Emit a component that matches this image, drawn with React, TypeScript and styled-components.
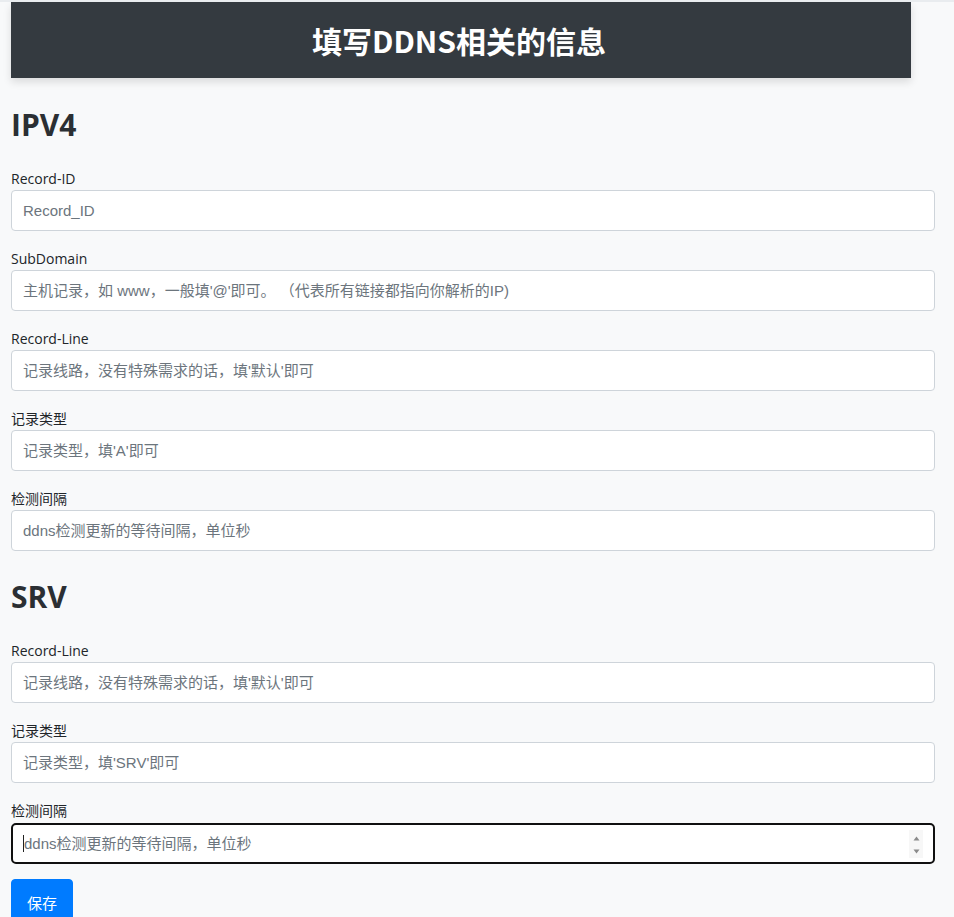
import React from "react";
import styled, { createGlobalStyle } from "styled-components";

const GlobalStyle = createGlobalStyle`
  html, body {
    margin: 0;
    padding: 0;
    background: #f8f9fa;
  }
  body {
    border-top: 2px solid #e9ecef;
    font-family: "Open Sans", "Noto Sans CJK SC", sans-serif;
    color: #212529;
  }
`;

const Page = styled.div`
  display: flex;
  flex-direction: column;
  padding: 0 19px 0 11px;
  min-height: 915px;
`;

const Header = styled.header`
  width: 900px;
  height: 76px;
  background: #343a40;
  box-shadow: 0 4px 8px rgba(0, 0, 0, 0.12);
  display: flex;
  align-items: center;
  justify-content: center;
`;

const Title = styled.h1`
  margin: 0 4px 0 0;
  color: #fff;
  font-family: "Noto Sans CJK SC", sans-serif;
  font-size: 30px;
  font-weight: 700;
  line-height: 1.2;
`;

const SectionTitle = styled.h2<{ $first?: boolean }>`
  margin: ${(p) => (p.$first ? "29px" : "11px")} 0 25px;
  font-family: "Open Sans", "Noto Sans CJK SC", sans-serif;
  font-size: 30px;
  font-weight: 700;
  line-height: 36px;
  color: #2b2f33;
`;

const Group = styled.div`
  display: flex;
  flex-direction: column;
  margin-bottom: 17px;
`;

const Label = styled.label`
  font-family: "Open Sans", "Noto Sans CJK SC", sans-serif;
  font-size: 14px;
  line-height: 21px;
  margin-bottom: 1px;
  color: #212529;
`;

const InputWrap = styled.div`
  position: relative;
  display: flex;
`;

const Input = styled.input<{ $focused?: boolean }>`
  box-sizing: border-box;
  width: 100%;
  height: 41px;
  padding: 0 11px;
  border: 1px solid #ced4da;
  border-radius: 4px;
  background: #fff;
  font-family: "Liberation Sans", "Noto Sans CJK SC", sans-serif;
  font-size: 15px;
  color: #495057;
  outline: none;
  -moz-appearance: textfield;
  &::placeholder {
    color: #6c757d;
  }
  &::-webkit-inner-spin-button,
  &::-webkit-outer-spin-button {
    -webkit-appearance: none;
    margin: 0;
  }
  ${(p) =>
    p.$focused
      ? `border: 2px solid #101010; padding: 0 10px 0 11px; border-radius: 5px; margin-top: 1px;`
      : ""}
`;

const Spinner = styled.div`
  position: absolute;
  right: 12px;
  top: 8px;
  width: 14px;
  height: 28px;
  background: #f7f7f7;
  display: flex;
  flex-direction: column;
  align-items: center;
  justify-content: space-between;
  padding: 6px 0 4px;
  box-sizing: border-box;
  pointer-events: none;
`;

const Caret = styled.span`
  position: absolute;
  left: 12px;
  top: 13px;
  width: 1px;
  height: 17px;
  background: #222;
  pointer-events: none;
`;

const SaveButton = styled.button`
  align-self: flex-start;
  margin-top: -2px;
  padding: 12px 15px;
  border: 1px solid #007bff;
  border-radius: 4px;
  background: #007bff;
  color: #fff;
  font-family: "Noto Sans CJK SC", sans-serif;
  font-size: 15px;
  line-height: 22px;
  cursor: pointer;
`;

type Field = { label: string; placeholder: string; type?: string; focused?: boolean };

const ipv4: Field[] = [
  { label: "Record-ID", placeholder: "Record_ID" },
  { label: "SubDomain", placeholder: "主机记录，如 www，一般填'@'即可。 （代表所有链接都指向你解析的IP)" },
  { label: "Record-Line", placeholder: "记录线路，没有特殊需求的话，填'默认'即可" },
  { label: "记录类型", placeholder: "记录类型，填'A'即可" },
  { label: "检测间隔", placeholder: "ddns检测更新的等待间隔，单位秒" },
];

const srv: Field[] = [
  { label: "Record-Line", placeholder: "记录线路，没有特殊需求的话，填'默认'即可" },
  { label: "记录类型", placeholder: "记录类型，填'SRV'即可" },
  { label: "检测间隔", placeholder: "ddns检测更新的等待间隔，单位秒", type: "number", focused: true },
];

function FieldGroup({ f, id }: { f: Field; id: string }) {
  return (
    <Group>
      <Label htmlFor={id}>{f.label}</Label>
      <InputWrap>
        <Input id={id} type={f.type ?? "text"} placeholder={f.placeholder} $focused={f.focused} />
        {f.focused && (
          <>
            <Caret />
            <Spinner>
              <svg width="7" height="5" viewBox="0 0 7 5">
                <path d="M3.5 0.5 L6.5 4.5 L0.5 4.5 Z" fill="#8a8a8a" />
              </svg>
              <svg width="7" height="5" viewBox="0 0 7 5">
                <path d="M0.5 0.5 L6.5 0.5 L3.5 4.5 Z" fill="#8a8a8a" />
              </svg>
            </Spinner>
          </>
        )}
      </InputWrap>
    </Group>
  );
}

export default function App() {
  return (
    <>
      <GlobalStyle />
      <Page>
        <Header>
          <Title>填写DDNS相关的信息</Title>
        </Header>
        <SectionTitle $first>IPV4</SectionTitle>
        {ipv4.map((f, i) => (
          <FieldGroup key={"a" + i} f={f} id={"ipv4-" + i} />
        ))}
        <SectionTitle>SRV</SectionTitle>
        {srv.map((f, i) => (
          <FieldGroup key={"b" + i} f={f} id={"srv-" + i} />
        ))}
        <SaveButton type="button">保存</SaveButton>
      </Page>
    </>
  );
}
